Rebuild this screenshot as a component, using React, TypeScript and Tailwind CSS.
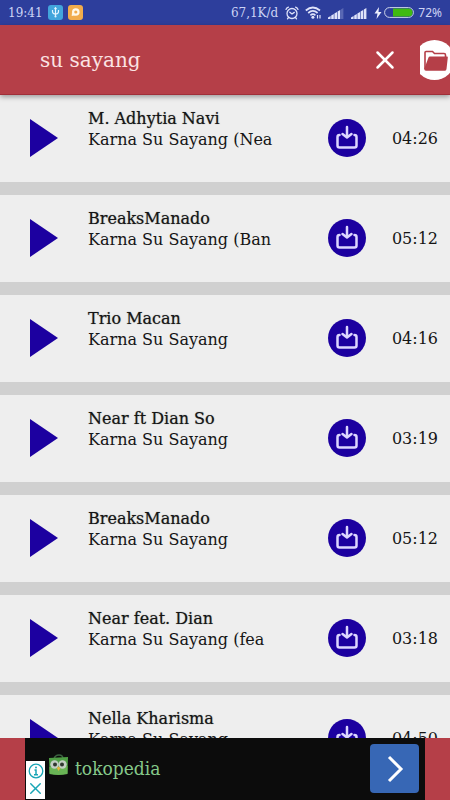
import { X } from "lucide-react";

const songs = [
  { artist: "M. Adhytia Navi", title: "Karna Su Sayang (Nea", time: "04:26" },
  { artist: "BreaksManado", title: "Karna Su Sayang (Ban", time: "05:12" },
  { artist: "Trio Macan", title: "Karna Su Sayang", time: "04:16" },
  { artist: "Near ft Dian So", title: "Karna Su Sayang", time: "03:19" },
  { artist: "BreaksManado", title: "Karna Su Sayang", time: "05:12" },
  { artist: "Near feat. Dian", title: "Karna Su Sayang (fea", time: "03:18" },
  { artist: "Nella Kharisma", title: "Karna Su Sayang", time: "04:50" },
];

function SignalIcon({ bars }: { bars: number }) {
  return (
    <svg width="16" height="12" viewBox="0 0 16 12" fill="#dfe3fa">
      {[0, 1, 2, 3, 4].map((i) => (
        <path
          key={i}
          d={`M${i * 3.2} 12V${10.5 - i * 2}l2.600-1.600V12z`}
          opacity={i < bars ? 1 : 0.25}
        />
      ))}
    </svg>
  );
}

function StatusBar() {
  return (
    <div className="flex h-[25px] shrink-0 items-center bg-[#2d3e9c] pl-2 pr-2 text-xs text-[#ccd3f5]">
      <span className="w-10 font-['DejaVu_Serif',serif]">19:41</span>
      <svg className="mr-[5px]" width="15" height="15" viewBox="0 0 15 15" fill="none">
        <rect width="15" height="15" rx="3" fill="#42a5dc" />
        <path
          d="M7.5 3v9M4.5 5v1.5q0 2.500 3 2.500t3-2.500V5M6.500 4.200l1-1.400 1 1.400"
          stroke="#e4f5ff"
          strokeWidth="1.2"
        />
        <circle cx="7.5" cy="11.5" r="1" fill="#e4f5ff" />
      </svg>
      <svg width="15" height="15" viewBox="0 0 15 15" fill="none">
        <rect width="15" height="15" rx="3" fill="#f1ac4c" />
        <circle cx="7.8" cy="7" r="2.700" stroke="#fff8e8" strokeWidth="2.200" />
        <path d="M4 7.500l-.3 3.500 3.500-.8z" fill="#fff8e8" />
      </svg>
      <div className="flex-1" />
      <span className="mr-[7px] font-['DejaVu_Serif',serif]">67,1K/d</span>
      <svg
        className="mr-[6px]"
        width="14"
        height="14"
        viewBox="0 0 14 14"
        fill="none"
        stroke="#dfe3fa"
        strokeWidth="1.3"
        strokeLinecap="round"
      >
        <circle cx="7" cy="7.500" r="5" />
        <path d="M4.800 6.200L7 8l2.300-1.600M1 3.400Q1.600 1.800 3.400 1.200M13 3.400q-.6-1.600-2.400-2.200M3.500 11.500l-1 1.300M10.500 11.500l1 1.300" />
      </svg>
      <svg className="mr-[6px]" width="17" height="13" viewBox="0 0 17 13" fill="none" stroke="#dfe3fa">
        <path
          d="M.8 4.500q7-6 14.200 0M3.200 7q4.700-4.200 9.400 0M5.400 9.300q2.500-2.200 5 0"
          strokeWidth="1.700"
        />
        <circle cx="7.900" cy="11.200" r="1.500" fill="#dfe3fa" stroke="none" />
        <path d="M12.500 9v3.500M15 9v3.500" strokeWidth="1.200" />
      </svg>
      <div className="mr-[7px]">
        <SignalIcon bars={4} />
      </div>
      <div className="mr-[7px]">
        <SignalIcon bars={5} />
      </div>
      <svg className="mr-[2px]" width="8" height="12" viewBox="0 0 8 12" fill="#eceefd">
        <path d="M5 0L.5 6.500h3L2.500 12l5-7h-3z" />
      </svg>
      <svg className="mr-1" width="30" height="11" viewBox="0 0 30 11">
        <rect x=".6" y=".6" width="28.800" height="9.800" rx="4.900" fill="none" stroke="#cdd5e8" />
        <path d="M9 1.500h15.500a4 4 0 0 1 0 8H9z" fill="#3fba12" />
      </svg>
      <span className="font-['Noto_Sans',sans-serif] text-xs">72%</span>
    </div>
  );
}

function SearchBar() {
  return (
    <header className="relative flex h-[70px] shrink-0 items-center border-b border-[#a02f39] bg-[#b53f48] pl-10 shadow-[0_2px_5px_rgba(0,0,0,0.35)]">
      <input
        type="text"
        aria-label="Search songs"
        defaultValue="su sayang"
        className="min-w-0 flex-1 bg-transparent text-xl text-[#fbe3e3] outline-none"
      />
      <button type="button" aria-label="Clear search" className="mr-5 text-white">
        <X size={30} strokeWidth={2} />
      </button>
      <button type="button" aria-label="Downloads" className="w-[30px] overflow-hidden">
        <svg width="30" height="40" viewBox="0 0 30 40" fill="none">
          <circle cx="14.500" cy="20" r="20" fill="#fff" />
          <path
            d="M5 29V12.500q0-1 1-1h6.500l2 2H24q1.500 0 1.500 1.500v2"
            stroke="#b53f48"
            strokeWidth="1.600"
          />
          <path
            d="M10 16.500h17q1 0 .8 1L26.500 29q-.2 1.800-1.500 1.800H6q-1.800 0-1.800-1.800l4.300-11.500q.3-1 1.500-1z"
            fill="#b53f48"
          />
        </svg>
      </button>
    </header>
  );
}

function SongRow({ artist, title, time }: { artist: string; title: string; time: string }) {
  return (
    <li className="flex h-[100px] shrink-0 items-start border-b-[13px] border-[#d0d0d0] bg-[#eeeeee] pl-[30px] pr-3">
      <button type="button" aria-label={`Play ${artist}`} className="mt-6 w-[58px]">
        <svg width="28" height="38" viewBox="0 0 28 38">
          <path d="M0 0L28 19 0 38z" fill="#1c00a0" />
        </svg>
      </button>
      <div className="mt-[13px] min-w-0 flex-1 whitespace-nowrap text-base leading-[21px] text-[#151515]">
        <p className="[text-shadow:0_0_1px_#777]">{artist}</p>
        <p>{title}</p>
      </div>
      <button type="button" aria-label={`Download ${artist}`} className="mr-6 mt-6">
        <svg width="38" height="38" viewBox="0 0 38 38" fill="none">
          <circle cx="19" cy="19" r="19" fill="#1c00a0" />
          <path
            d="M11.500 16q-2 0-2 2v8.500q0 2 2 2h15q2 0 2-2V18q0-2-2-2"
            stroke="#dcd6ff"
            strokeWidth="2.500"
            strokeLinecap="round"
          />
          <path
            d="M19 8v10M14.500 15l4.500 3.500 4.500-3.500"
            stroke="#dcd6ff"
            strokeWidth="2.500"
            strokeLinecap="round"
            strokeLinejoin="round"
          />
        </svg>
      </button>
      <span className="mt-[33px] w-12 text-right text-base leading-[21px] text-[#151515]">{time}</span>
    </li>
  );
}

function AdBanner() {
  return (
    <aside className="flex h-[62px] shrink-0 bg-[#b53f48] px-[25px]">
      <div className="flex flex-1 items-start bg-[#0c0c0c] pl-px pr-[6px]">
        <div className="mt-[23px] flex h-[38px] w-[19px] flex-col items-center bg-white">
          <button type="button" aria-label="Ad information">
            <svg className="mt-[2px]" width="16" height="16" viewBox="0 0 16 16" fill="none" stroke="#18a5b5">
              <circle cx="8" cy="8" r="6.800" strokeWidth="1.300" />
              <path d="M6.500 7H8v4.500M6 11.700h4" strokeWidth="1.500" />
              <circle cx="8" cy="4.500" r="1" fill="#18a5b5" stroke="none" />
            </svg>
          </button>
          <button type="button" aria-label="Close ad" className="text-[#18a5b5]">
            <X size={19} strokeWidth={1.800} />
          </button>
        </div>
        <a href="#" className="mt-4 flex flex-1 items-start text-[#85c98a]">
          <svg className="ml-1 mr-[7px]" width="19" height="22" viewBox="0 0 19 22">
            <path d="M5 5Q6 1 10 1t4 4" fill="none" stroke="#3c6340" strokeWidth="1.500" />
            <path d="M0 4l19-1-.5 16.500q-9 2-18 0z" fill="#4f9f45" />
            <path d="M.5 13l18-1v8q-9 2-18 0z" fill="#69b455" />
            <circle cx="5.500" cy="10.500" r="4.200" fill="#c4cfc4" />
            <circle cx="13.500" cy="10.500" r="4.200" fill="#c4cfc4" />
            <circle cx="6" cy="10.500" r="2" fill="#303830" />
            <circle cx="13" cy="10.500" r="2" fill="#303830" />
            <path d="M7.800 14l1.800-1.500 1.800 1.500-1.800 3z" fill="#e7b23d" />
          </svg>
          <span className="font-['DejaVu_Serif_Condensed','DejaVu_Serif',serif] text-[19px] leading-7">
            tokopedia
          </span>
        </a>
        <button
          type="button"
          aria-label="Open ad"
          className="mt-[6px] flex size-[49px] items-center justify-center rounded bg-[#3767b5]"
        >
          <svg width="18" height="28" viewBox="0 0 18 28" fill="none">
            <path d="M3 2l12 12L3 26" stroke="#fff" strokeWidth="3" />
          </svg>
        </button>
      </div>
    </aside>
  );
}

export default function App() {
  return (
    <div className="flex h-screen flex-col overflow-hidden bg-[#eeeeee] font-['DejaVu_Serif',serif]">
      <StatusBar />
      <SearchBar />
      <ul className="flex min-h-0 flex-1 flex-col overflow-hidden">
        {songs.map((song, index) => (
          <SongRow key={index} {...song} />
        ))}
      </ul>
      <AdBanner />
    </div>
  );
}
